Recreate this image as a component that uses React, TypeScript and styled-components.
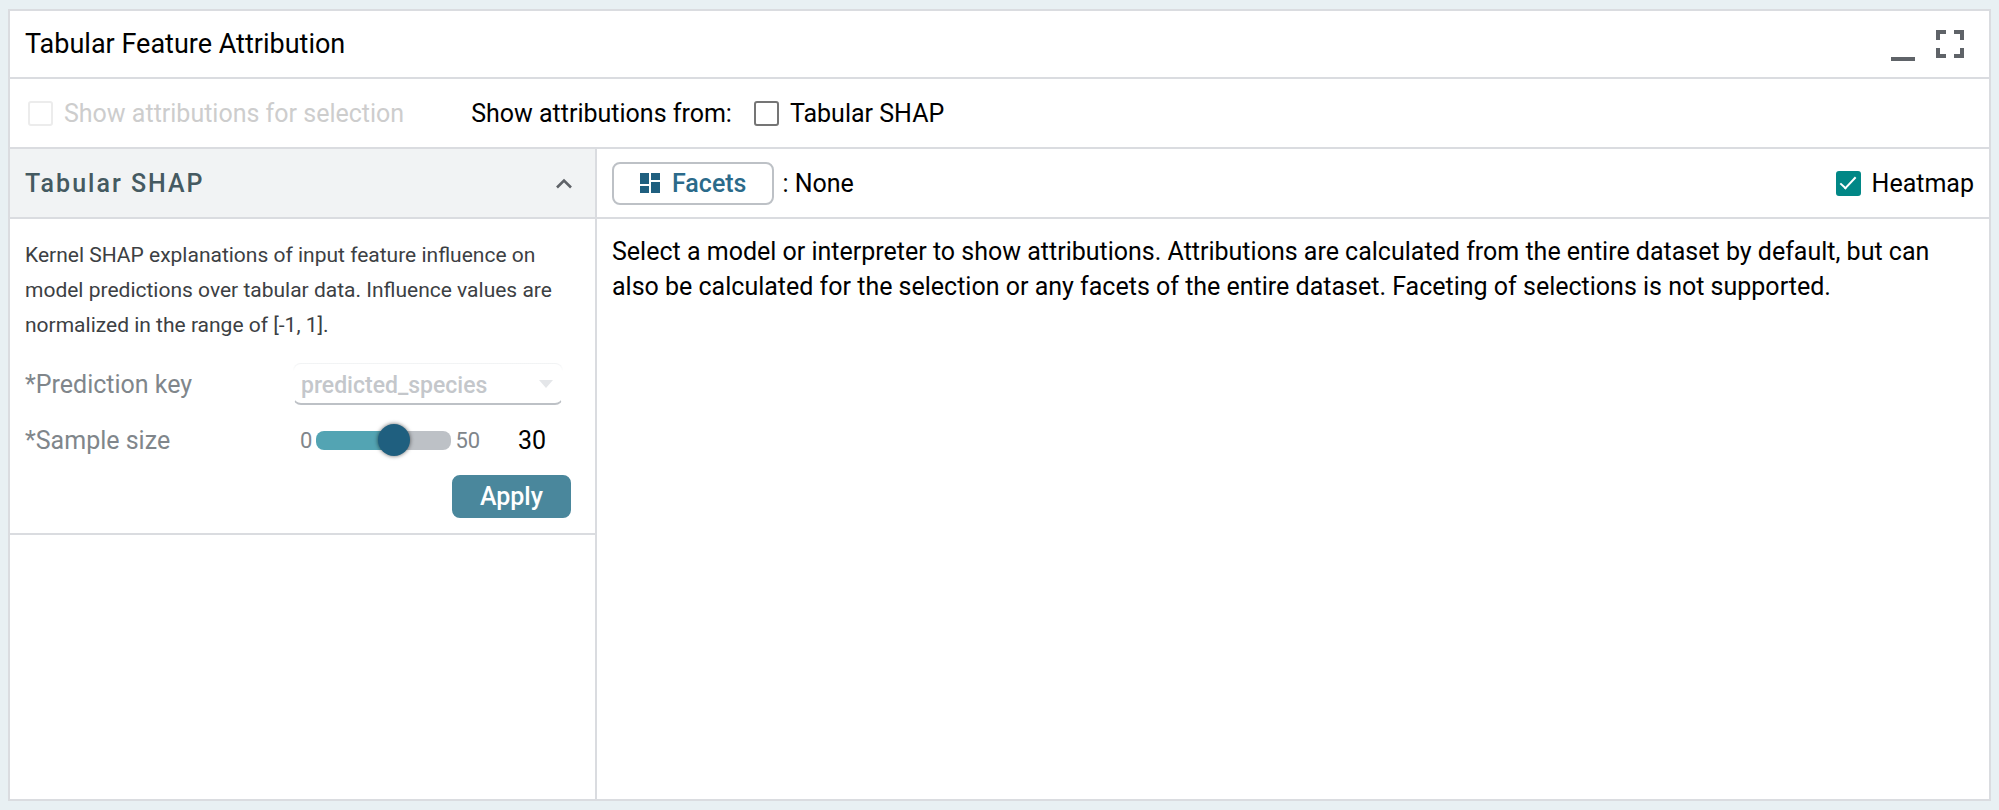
import { useState } from "react";
import styled, { createGlobalStyle } from "styled-components";

const line = "#dadce0";

const GlobalStyle = createGlobalStyle`
  *, *::before, *::after { box-sizing: border-box; }
  body {
    margin: 0;
    background: #e8f0f3;
    color: #000;
    font-family: Roboto, "Liberation Sans", sans-serif;
    font-size: 25px;
    line-height: 35px;
  }
  button, input, select { font: inherit; margin: 0; }
`;

const Page = styled.div`
  display: flex;
  min-height: 100vh;
  padding: 9px 8px;
`;

const Module = styled.section`
  flex: 1;
  display: flex;
  flex-direction: column;
  min-width: 0;
  background: #fff;
  border: 2px solid ${line};
`;

const TitleBar = styled.header`
  display: flex;
  align-items: center;
  justify-content: space-between;
  height: 68px;
  padding: 0 25px 0 15px;
  border-bottom: 2px solid ${line};
`;

const Title = styled.h1`
  margin: 0;
  font-size: 27px;
  font-weight: 400;
`;

const WindowActions = styled.div`
  display: flex;
  gap: 16px;
`;

const IconButton = styled.button`
  display: flex;
  padding: 0;
  border: 0;
  background: none;
  color: #5f6368;
  cursor: pointer;
`;

const Toolbar = styled.div<{ $spread?: boolean }>`
  display: flex;
  align-items: center;
  justify-content: ${(p) => (p.$spread ? "space-between" : "flex-start")};
  height: 70px;
  padding: ${(p) => (p.$spread ? "0 15px" : "0 18px")};
  border-bottom: 2px solid ${line};
`;

const CheckLabel = styled.label<{ $disabled?: boolean }>`
  display: flex;
  align-items: center;
  gap: 11px;
  color: ${(p) => (p.$disabled ? "#cdcdcd" : "#000")};
`;

const CheckBox = styled.input`
  appearance: none;
  display: grid;
  place-items: center;
  width: 25px;
  height: 25px;
  border: 2px solid #757575;
  border-radius: 3px;
  background: #fff;
  &:disabled { border-color: #ececec; }
  &:checked { border-color: #018786; background: #018786; }
  &:checked::after {
    content: "";
    width: 8px;
    height: 16px;
    margin-bottom: 4px;
    border: solid #fff;
    border-width: 0 2px 2px 0;
    transform: rotate(43deg);
  }
`;

const Sources = styled.div`
  display: flex;
  align-items: center;
  gap: 22px;
  margin-left: 67px;
`;

const Body = styled.div`
  flex: 1;
  display: flex;
`;

const Sidebar = styled.aside`
  flex: 0 0 587px;
  border-right: 2px solid ${line};
`;

const Main = styled.main`
  flex: 1;
  min-width: 0;
`;

const SectionToggle = styled.button`
  display: flex;
  align-items: center;
  justify-content: space-between;
  width: 100%;
  height: 70px;
  padding: 0 21px 0 15px;
  border: 0;
  border-bottom: 2px solid ${line};
  background: #f1f3f4;
  color: #455a61;
  font-weight: 500;
  letter-spacing: 2px;
  cursor: pointer;
`;

const Controls = styled.form`
  padding: 19px 24px 15px 15px;
  border-bottom: 2px solid ${line};
`;

const Description = styled.p`
  margin: 0 0 20px;
  color: #3c4043;
  font-size: 21px;
`;

const Field = styled.div`
  display: grid;
  grid-template-columns: 268px 1fr;
  align-items: center;
  height: 42px;
  margin-bottom: 14px;
  padding-right: 8px;
  color: #80868b;
`;

const SelectBox = styled.div`
  display: grid;
  align-items: center;
  > * { grid-area: 1 / 1; }
  > svg { justify-self: end; margin-right: 10px; }
`;

const Select = styled.select`
  appearance: none;
  width: 100%;
  height: 42px;
  padding: 4px 32px 0 7px;
  border: 1px solid transparent;
  border-bottom: 2px solid #bdc1c6;
  border-radius: 8px;
  background: linear-gradient(#fff, #fff) padding-box, linear-gradient(#f1f3f4, #fff 8px) border-box;
  color: #c4c7cb;
  font-size: 23px;
  font-weight: 500;
  opacity: 1;
`;

const SliderBox = styled.div`
  display: flex;
  align-items: center;
  padding-left: 7px;
  font-size: 22px;
`;

const Slider = styled.input<{ $fill: number }>`
  appearance: none;
  width: 135px;
  height: 19px;
  margin: 0 4px;
  border-radius: 8px;
  background: linear-gradient(to right, #53a4b3 ${(p) => p.$fill}%, #bdc1c6 ${(p) => p.$fill}%);
  &::-webkit-slider-thumb {
    appearance: none;
    width: 32px;
    height: 32px;
    border-radius: 50%;
    background: #1f5f7f;
    box-shadow: 0 0 4px rgba(0, 0, 0, 0.6);
  }
`;

const NumberBox = styled.input`
  appearance: textfield;
  width: 60px;
  height: 35px;
  margin-left: 22px;
  padding: 0;
  border: 0;
  background: none;
  color: #000;
  font-size: 25px;
  text-align: center;
  &::-webkit-inner-spin-button { appearance: none; margin: 0; }
`;

const Actions = styled.div`
  display: flex;
  justify-content: flex-end;
`;

const Button = styled.button<{ $filled?: boolean }>`
  display: flex;
  align-items: center;
  justify-content: center;
  gap: 12px;
  height: 43px;
  padding: 0 26px;
  border: 2px solid ${(p) => (p.$filled ? "#4a879c" : "#bdc1c6")};
  border-radius: 8px;
  background: ${(p) => (p.$filled ? "#4a879c" : "#fff")};
  color: ${(p) => (p.$filled ? "#fff" : "#2b6a8a")};
  font-weight: 500;
  cursor: pointer;
`;

const FacetGroup = styled.div`
  display: flex;
  align-items: center;
  gap: 8px;
`;

const Message = styled.p`
  margin: 0;
  padding: 15px;
`;

export default function App() {
  const [open, setOpen] = useState(true);
  const [shap, setShap] = useState(false);
  const [heatmap, setHeatmap] = useState(true);
  const [size, setSize] = useState(30);

  return (
    <Page>
      <GlobalStyle />
      <Module>
        <TitleBar>
          <Title>Tabular Feature Attribution</Title>
          <WindowActions>
            <IconButton aria-label="Minimize">
              <svg width="34" height="34" viewBox="0 0 34 34" fill="currentColor">
                <path d="M5 30h24v4H5z" />
              </svg>
            </IconButton>
            <IconButton aria-label="Full screen">
              <svg width="28" height="34" viewBox="0 0 28 34" fill="currentColor">
                <path d="M0 3h10v4H4v6H0zM18 3h10v10h-4V7h-6zM0 21h4v6h6v4H0zM24 21h4v10H18v-4h6z" />
              </svg>
            </IconButton>
          </WindowActions>
        </TitleBar>
        <Toolbar>
          <CheckLabel $disabled>
            <CheckBox type="checkbox" disabled />
            Show attributions for selection
          </CheckLabel>
          <Sources>
            <span>Show attributions from:</span>
            <CheckLabel>
              <CheckBox type="checkbox" checked={shap} onChange={() => setShap(!shap)} />
              Tabular SHAP
            </CheckLabel>
          </Sources>
        </Toolbar>
        <Body>
          <Sidebar>
            <SectionToggle aria-expanded={open} onClick={() => setOpen(!open)}>
              Tabular SHAP
              <svg width="20" height="20" viewBox="0 0 20 20" fill="none" stroke="#5f6368" strokeWidth="2.6">
                <path d="M3 14.500l7-7 7 7" />
              </svg>
            </SectionToggle>
            {open && (
              <Controls onSubmit={(e) => e.preventDefault()}>
                <Description>
                  Kernel SHAP explanations of input feature influence on model predictions over
                  tabular data. Influence values are normalized in the range of [-1, 1].
                </Description>
                <Field>
                  <label htmlFor="key">*Prediction key</label>
                  <SelectBox>
                    <Select id="key" disabled>
                      <option>predicted_species</option>
                    </Select>
                    <svg width="14" height="8" viewBox="0 0 14 8" fill="#e4e6e9">
                      <path d="M0 0h14L7 8z" />
                    </svg>
                  </SelectBox>
                </Field>
                <Field>
                  <label htmlFor="size">*Sample size</label>
                  <SliderBox>
                    0
                    <Slider
                      id="size"
                      type="range"
                      min={0}
                      max={50}
                      value={size}
                      $fill={size * 2}
                      onChange={(e) => setSize(Number(e.target.value))}
                    />
                    50
                    <NumberBox
                      type="number"
                      aria-label="Sample size value"
                      value={size}
                      onChange={(e) => setSize(Number(e.target.value))}
                    />
                  </SliderBox>
                </Field>
                <Actions>
                  <Button $filled type="submit">Apply</Button>
                </Actions>
              </Controls>
            )}
          </Sidebar>
          <Main>
            <Toolbar $spread>
              <FacetGroup>
                <Button type="button">
                  <svg width="20" height="20" viewBox="0 0 20 20" fill="#1f5f7f">
                    <path d="M0 0h9v11H0zM11 0h9v7h-9zM0 13h9v7H0zM11 9h9v11h-9z" />
                  </svg>
                  Facets
                </Button>
                <span>: None</span>
              </FacetGroup>
              <CheckLabel>
                <CheckBox type="checkbox" checked={heatmap} onChange={() => setHeatmap(!heatmap)} />
                Heatmap
              </CheckLabel>
            </Toolbar>
            <Message>
              Select a model or interpreter to show attributions. Attributions are calculated from
              the entire dataset by default, but can also be calculated for the selection or any
              facets of the entire dataset. Faceting of selections is not supported.
            </Message>
          </Main>
        </Body>
      </Module>
    </Page>
  );
}
